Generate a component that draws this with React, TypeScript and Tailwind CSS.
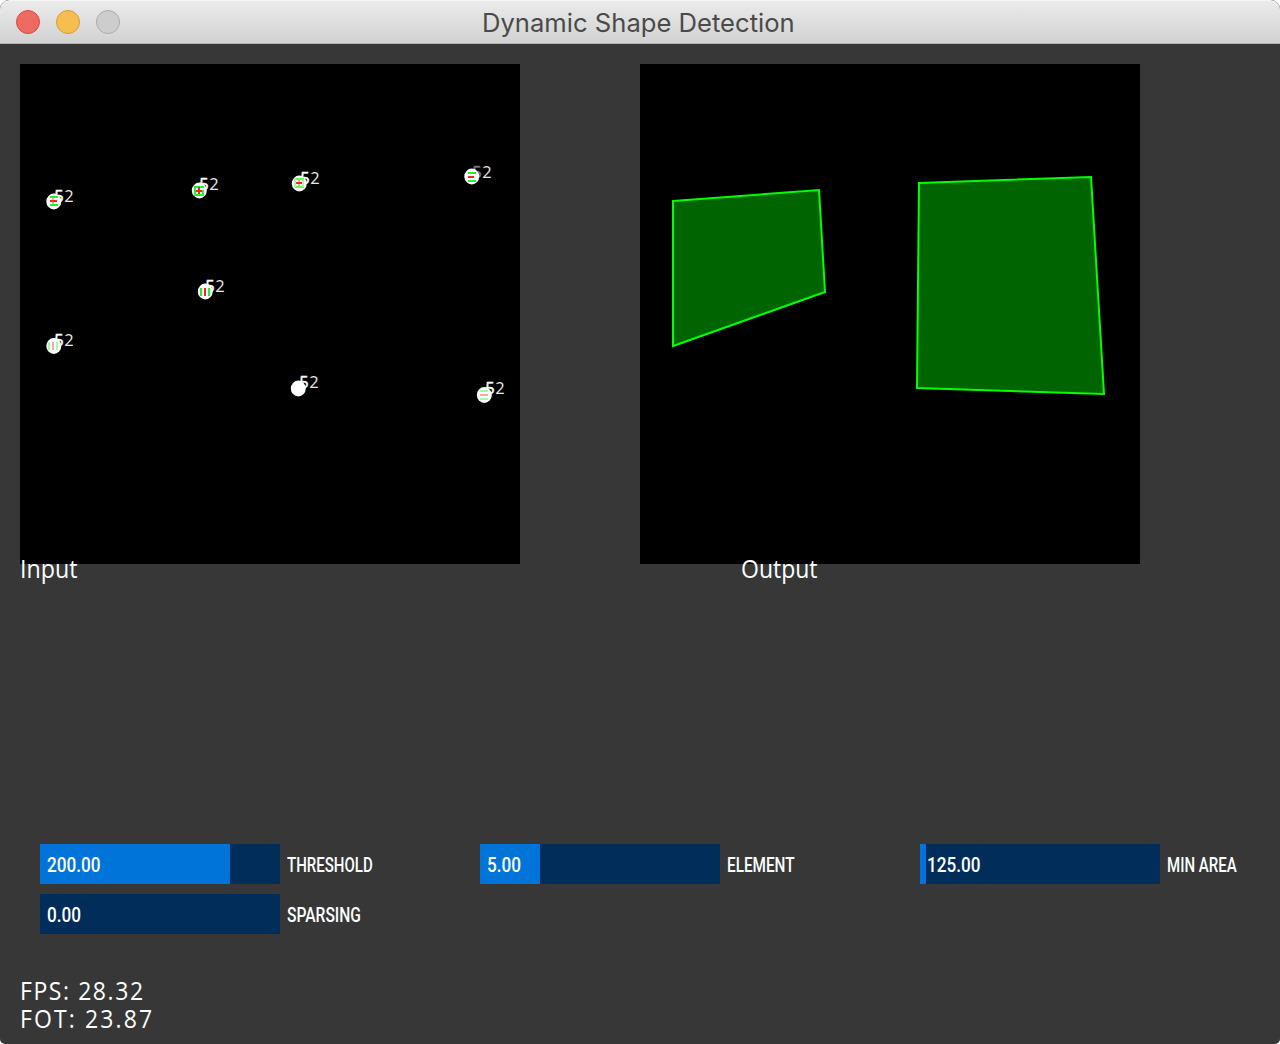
import React from "react";

type Mark = [x: number, y: number, w: number, h: number, color: string];

interface Blob {
  cx: number;
  cy: number;
  labelX: number;
  labelY: number;
  dimFirst?: boolean;
  marks: Mark[];
}

const G = "#22f22a";
const LG = "#9dff9d";
const R = "#ff2020";
const P = "#ffa3a3";

const blobs: Blob[] = [
  {
    cx: 53.5, cy: 201.5, labelX: 55, labelY: 202,
    marks: [[50, 196, 8, 2, G], [50, 204, 8, 2, G], [52, 198, 2, 6, P], [50, 200, 7, 2, R]],
  },
  {
    cx: 199, cy: 190.5, labelX: 200, labelY: 190,
    marks: [[194, 186, 10, 2, G], [194, 194, 10, 2, G], [194, 186, 2, 10, G], [202, 190, 2, 5, G], [196, 190, 6, 2, R], [198, 187, 2, 7, R]],
  },
  {
    cx: 299, cy: 183.5, labelX: 301, labelY: 184,
    marks: [[295, 178, 9, 2, "#58ff58"], [295, 186, 9, 2, "#58ff58"], [294, 179, 2, 8, LG], [302, 180, 2, 7, LG], [298, 180, 2, 6, P], [296, 182, 6, 2, R]],
  },
  {
    cx: 471.5, cy: 176.5, labelX: 473, labelY: 178, dimFirst: true,
    marks: [[468, 172, 8, 2, G], [468, 180, 8, 2, G], [468, 176, 6, 2, R]],
  },
  {
    cx: 205, cy: 291.5, labelX: 206, labelY: 292,
    marks: [[200, 288, 2, 8, G], [208, 288, 2, 8, G], [204, 288, 2, 8, R]],
  },
  {
    cx: 53.5, cy: 346, labelX: 55, labelY: 346,
    marks: [[48, 342, 2, 8, LG], [56, 342, 2, 8, LG], [52, 342, 2, 8, P]],
  },
  { cx: 298, cy: 388.5, labelX: 300, labelY: 388, marks: [] },
  {
    cx: 484, cy: 395, labelX: 486, labelY: 394,
    marks: [[480, 390, 8, 2, LG], [480, 398, 8, 2, LG], [480, 394, 8, 2, P]],
  },
];

function InputCanvas() {
  return (
    <svg className="block h-[500px] w-[500px] bg-black" viewBox="20 64 500 500">
      {blobs.map((b, i) => (
        <g key={i}>
          <text
            x={`${b.labelX - 0.7} ${b.labelX + 9.2}`}
            y={b.labelY}
            fill="#e8e8e8"
            fontSize={16.5}
            fontFamily="'Open Sans', sans-serif"
          >
            <tspan fill={b.dimFirst ? "#777" : "#fff"} stroke={b.dimFirst ? "#777" : "#fff"} strokeWidth={0.5}>5</tspan>2
          </text>
          <ellipse cx={b.cx + 0.3} cy={b.cy} rx={7.5} ry={7.9} fill="#fff" />
          {b.marks.map(([x, y, w, h, c], j) => (
            <rect key={j} x={x} y={y} width={w} height={h} fill={c} shapeRendering="crispEdges" />
          ))}
        </g>
      ))}
    </svg>
  );
}

function OutputCanvas() {
  return (
    <svg className="block h-[500px] w-[500px] bg-black" viewBox="640 64 500 500">
      <g fill="#006400" stroke="#00ff00" strokeWidth={2}>
        <polygon points="673,201 819,190 825,292 673,346" />
        <polygon points="919,183 1091,177 1104,394 917,388" />
      </g>
    </svg>
  );
}

function Slider({ value, label, fill, scale }: { value: string; label: string; fill: string; scale: string }) {
  return (
    <div className="flex h-10 w-[440px] items-center font-['Roboto'] text-[19.5px] leading-10 font-medium text-white">
      <div className="relative h-10 w-60 shrink-0 bg-[#002d5a]">
        <div className={`h-full bg-[#0074d9] ${fill}`} />
        <span className="absolute top-[2px] left-[6.5px] origin-left scale-x-[0.88] whitespace-nowrap">{value}</span>
      </div>
      <span className={`relative top-[2px] ml-[7px] origin-left whitespace-nowrap ${scale}`}>{label}</span>
    </div>
  );
}

function TitleBar() {
  return (
    <header className="relative flex h-11 items-center rounded-t-[9px] border-t border-b border-t-[#f6f6f6] border-b-[#b4b4b4] bg-linear-to-b from-[#ebebeb] to-[#d2d2d2] px-4">
      <div className="flex gap-4">
        <i className="size-6 rounded-full border border-[#da4d45] bg-[#ef6a60]" />
        <i className="size-6 rounded-full border border-[#d99a3a] bg-[#f6be50]" />
        <i className="size-6 rounded-full border border-[#acacac] bg-[#cdcdcd]" />
      </div>
      <h1 className="absolute top-0 left-[482px] origin-left scale-x-[1.004] whitespace-nowrap font-['Inter'] text-[25.5px] leading-[43px] text-[#4a4a4a]">
        Dynamic Shape Detection
      </h1>
    </header>
  );
}

export default function App() {
  return (
    <div className="h-[1044px] w-[1280px] overflow-hidden bg-white">
      <div className="flex h-full flex-col overflow-hidden rounded-t-[9px] rounded-b-[5px] bg-[#373737] font-['Open_Sans'] text-white">
        <TitleBar />
        <main className="flex flex-1 flex-col">
          <div className="flex gap-[120px] pt-5 pl-5">
            <InputCanvas />
            <OutputCanvas />
          </div>
          <div className="relative -mt-[14px] flex h-9 text-[25px] leading-9">
            <div className="w-[721px] pl-[19.5px]">
              <span className="inline-block origin-left scale-x-[0.93]">Input</span>
            </div>
            <div className="pl-[19.5px]">
              <span className="inline-block origin-left scale-x-[0.92]">Output</span>
            </div>
          </div>
          <div className="mt-[258px] flex flex-wrap gap-y-[10px] pl-10">
            <Slider value="200.00" label="THRESHOLD" fill="w-[190px]" scale="scale-x-[0.77]" />
            <Slider value="5.00" label="ELEMENT" fill="w-[60px]" scale="scale-x-[0.785]" />
            <div className="w-[360px]">
              <Slider value="125.00" label="MIN AREA" fill="w-[6px]" scale="scale-x-[0.77]" />
            </div>
            <Slider value="0.00" label="SPARSING" fill="w-0" scale="scale-x-[0.8]" />
          </div>
          <div className="mt-[42px] flex flex-col items-start pl-[19.5px] text-[25px] leading-7">
            <span className="origin-left scale-x-[0.92] tracking-[1.7px]">FPS: 28.32</span>
            <span className="origin-left scale-x-[0.92] tracking-[2.3px]">FOT: 23.87</span>
          </div>
        </main>
      </div>
    </div>
  );
}
